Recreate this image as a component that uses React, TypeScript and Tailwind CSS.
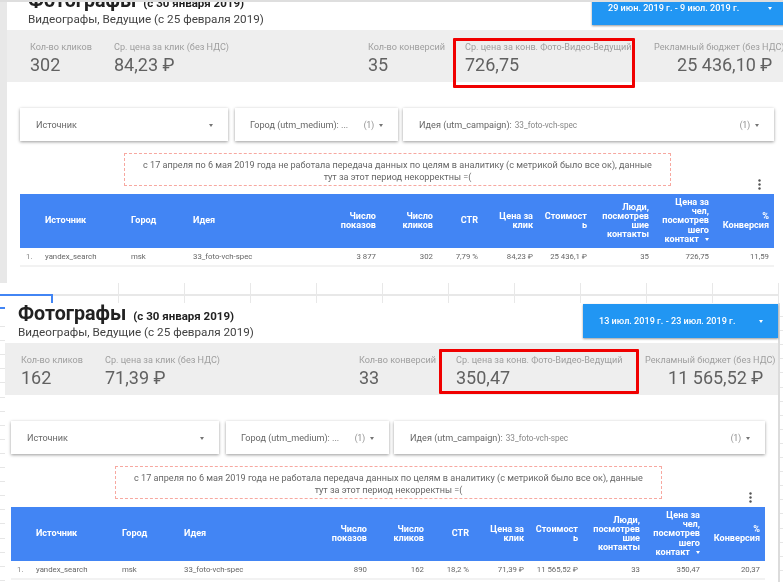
import React from "react";

type ReportData = {
  dates: string;
  clicks: string;
  cpc: string;
  conversions: string;
  cpa: string;
  budget: string;
  row: string[];
};

const first: ReportData = {
  dates: "29 июн. 2019 г. - 9 июл. 2019 г.",
  clicks: "302",
  cpc: "84,23 ₽",
  conversions: "35",
  cpa: "726,75",
  budget: "25 436,10 ₽",
  row: ["3 877", "302", "7,79 %", "84,23 ₽", "25 436,1 ₽", "35", "726,75", "11,59"],
};

const second: ReportData = {
  dates: "13 июл. 2019 г. - 23 июл. 2019 г.",
  clicks: "162",
  cpc: "71,39 ₽",
  conversions: "33",
  cpa: "350,47",
  budget: "11 565,52 ₽",
  row: ["890", "162", "18,2 %", "71,39 ₽", "11 565,52 ₽", "33", "350,47", "20,37"],
};

const columns = "grid grid-cols-[25px_86px_62px_130px_58px_57px_45px_55px_54px_62px_60px_60px]";

function Caret({ color = "#757575" }: { color?: string }) {
  return (
    <svg width="4" height="3" viewBox="0 0 4 3" className="shrink-0">
      <path d="M0 0h4L2 3z" fill={color} />
    </svg>
  );
}

function Kpi({ label, value, valueClass = "" }: { label: string; value: string; valueClass?: string }) {
  return (
    <div>
      <div className="text-[9.1px] leading-[12px] text-[#9e9e9e] whitespace-nowrap">{label}</div>
      <div className={`text-[18px] leading-[24px] text-[#616161] whitespace-nowrap ${valueClass}`}>{value}</div>
    </div>
  );
}

function Filter({ className, label, value, count }: { className: string; label: string; value?: string; count?: boolean }) {
  return (
    <div className={`flex h-[33px] items-center bg-white pt-[2px] shadow-[0_1px_3px_rgba(0,0,0,0.4)] text-[9.1px] text-[#666] ${className}`}>
      <span className="whitespace-nowrap">{label}</span>
      {value && <span className="ml-[3px] text-[8.2px] text-[#888] whitespace-nowrap">{value}</span>}
      <span className="flex-1" />
      {count && <span className="mr-[5px] text-[8.2px] text-[#888]">(1)</span>}
      <Caret />
    </div>
  );
}

function HeaderCell({ children }: { children: React.ReactNode }) {
  return (
    <div className="flex items-center justify-end pr-[5px] text-right text-[9.1px] font-bold leading-[9.2px] text-white">
      <div>{children}</div>
    </div>
  );
}

function Report({
  data,
  width,
  titlePad,
  inset,
  kpiPad,
  box,
}: {
  data: ReportData;
  width: string;
  titlePad: string;
  inset: string;
  kpiPad: string;
  box: string;
}) {
  return (
    <div className={`relative shrink-0 bg-white ${width}`}>
      <div className="flex h-[40px] justify-between">
        <div className={titlePad}>
          <div className="flex h-[22px] items-baseline font-bold leading-[22px] text-[#212121]">
            <span className="text-[19.7px]">Фотографы</span>
            <span className="ml-[7px] text-[11.5px]">(с 30 января 2019)</span>
          </div>
          <div className="text-[11.7px] leading-[14px] text-[#424242] whitespace-nowrap">
            Видеографы, Ведущие (с 25 февраля 2019)
          </div>
        </div>
        <div className="mt-px flex h-[34px] w-[195px] shrink-0 items-center bg-[#2196f3] pl-[16px] pr-[15px] pt-[1px] text-[9.1px] font-medium text-white shadow-[0_1px_2px_rgba(0,0,0,0.4)]">
          <span className="flex-1 whitespace-nowrap">{data.dates}</span>
          <Caret color="#ffffff" />
        </div>
      </div>

      <div className={`grid h-[52px] grid-cols-[84px_254px_97px_189px_1fr] items-start bg-[#eeeeee] pt-[11px] ${kpiPad}`}>
        <Kpi label="Кол-во кликов" value={data.clicks} />
        <Kpi label="Ср. цена за клик (без НДС)" value={data.cpc} />
        <Kpi label="Кол-во конверсий" value={data.conversions} />
        <Kpi label="Ср. цена за конв. Фото-Видео-Ведущий" value={data.cpa} />
        <div className="w-fit text-center">
          <Kpi label="Рекламный бюджет (без НДС)" value={data.budget} valueClass="pl-[11px]" />
        </div>
      </div>

      <div className={`mt-[26px] flex ${inset}`}>
        <Filter className="w-[208px] pl-[16px] pr-[15px]" label="Источник" />
        <Filter className="ml-[7px] w-[163px] pl-[15px] pr-[15px]" label="Город (utm_medium): ..." count />
        <Filter className="ml-[5px] w-[371px] pl-[16px] pr-[15px]" label="Идея (utm_campaign):" value="33_foto-vch-spec" count />
      </div>

      <div className={`relative mt-[12px] w-[754px] ${inset}`}>
        <div className="ml-[104px] h-[33px] w-[547px] border border-dashed border-[#f7a8a0] px-[12px] pt-[6px] text-center text-[9.1px] leading-[11.5px] text-[#666]">
          с 17 апреля по 6 мая 2019 года не работала передача данных по целям в аналитику (с метрикой было все ок), данные тут за этот период некорректны =(
        </div>
        <svg width="3" height="11" viewBox="0 0 3 11" className="absolute right-[13px] top-[26px]">
          <circle cx="1.5" cy="1.5" r="1.2" fill="#555" />
          <circle cx="1.5" cy="5.5" r="1.2" fill="#555" />
          <circle cx="1.5" cy="9.5" r="1.2" fill="#555" />
        </svg>
      </div>

      <div className={`mt-[8px] w-[754px] ${inset}`}>
        <div className={`${columns} h-[54px] bg-[#4285f4]`}>
          <div />
          <div className="flex items-center text-[9.1px] font-bold text-white">Источник</div>
          <div className="flex items-center text-[9.1px] font-bold text-white">Город</div>
          <div className="flex items-center text-[9.1px] font-bold text-white">Идея</div>
          <HeaderCell>Число<br />показов</HeaderCell>
          <HeaderCell>Число<br />кликов</HeaderCell>
          <HeaderCell>CTR</HeaderCell>
          <HeaderCell>Цена за<br />клик</HeaderCell>
          <HeaderCell>Стоимост<br />ь</HeaderCell>
          <HeaderCell>Люди,<br />посмотрев<br />шие<br />контакты</HeaderCell>
          <HeaderCell>
            Цена за<br />чел,<br />посмотрев<br />шего<br />
            <span className="inline-flex items-center gap-[6px]">контакт <Caret color="#ffffff" /></span>
          </HeaderCell>
          <HeaderCell>%<br />Конверсия</HeaderCell>
        </div>
        <div className={`${columns} h-[19px] items-center border-b-2 border-[#f2f2f2] pt-px text-[7.8px] text-[#666]`}>
          <div className="pl-[6px] text-[#888]">1.</div>
          <div>yandex_search</div>
          <div>msk</div>
          <div>33_foto-vch-spec</div>
          {data.row.map((cell) => (
            <div key={cell} className="pr-[5px] text-right whitespace-nowrap">{cell}</div>
          ))}
        </div>
      </div>

      {/* red annotation drawn over the report */}
      <div className={`absolute border-[3px] border-[#f00000] rounded-[1px] ${box}`} />
    </div>
  );
}

function Ticks({ count, className }: { count: number; className: string }) {
  return (
    <div className={className}>
      {Array.from({ length: count }, (_, i) => (
        <div key={i} className="h-[14.1px] border-b border-[#e6e6e6]" />
      ))}
    </div>
  );
}

function SheetStrip() {
  return (
    <div className="flex h-[20px] bg-white">
      <div className="w-[53px] shrink-0">
        <div className="h-[13px] border-b-2 border-[#4285f4]" />
        <div className="h-[7px] border-r-2 border-[#4285f4]" />
      </div>
      {Array.from({ length: 11 }, (_, i) => (
        <div key={i} className="w-[66px] shrink-0">
          <div className="h-[13px] border-b-2 border-r border-[#e8e8e8]" />
          <div className="h-[7px] border-r border-[#e8e8e8]" />
        </div>
      ))}
    </div>
  );
}

export default function App() {
  return (
    <div className="h-[582px] w-[783px] overflow-hidden bg-white font-['Roboto',sans-serif] blur-[0.4px]">
      <div className="h-[2px] bg-[#dedede]" />
      <div className="flex h-[281px] overflow-hidden">
        <div className="w-[7px] shrink-0 bg-[#e8e8e8]" />
        <div className="-mt-[12px]">
          <Report
            data={first}
            width="w-[780px]"
            titlePad="pl-[21px]"
            inset="ml-[13px]"
            kpiPad="pl-[23px]"
            box="left-[446px] top-[48px] h-[50px] w-[182px]"
          />
        </div>
      </div>

      <SheetStrip />

      <div className="flex h-[279px]">
        <div className="w-[5px] shrink-0">
          <div className="mt-[4px] h-[2px] bg-[#4285f4]" />
          <Ticks count={19} className="mt-[4px]" />
        </div>
        <Report
          data={second}
          width="w-[773px]"
          titlePad="pl-[13px]"
          inset="ml-[6px]"
          kpiPad="pl-[16px]"
          box="left-[434px] top-[46px] h-[45px] w-[200px]"
        />
        <div className="h-full w-[2px] shrink-0 bg-[#dcdcdc]" />
        <Ticks count={20} className="w-[3px] shrink-0" />
      </div>
    </div>
  );
}
